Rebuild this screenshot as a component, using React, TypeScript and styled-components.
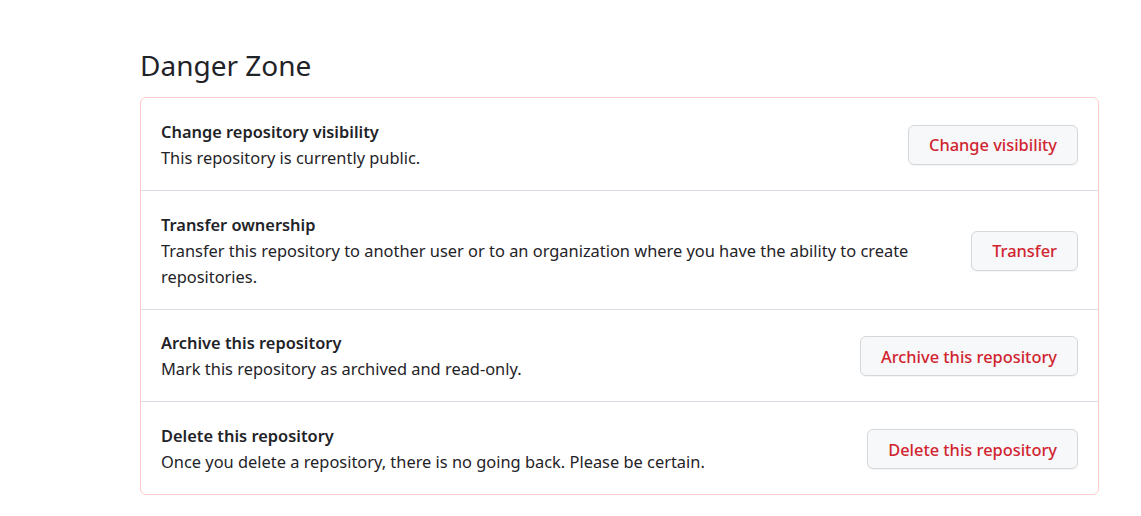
import React from "react";
import styled, { createGlobalStyle } from "styled-components";

const Global = createGlobalStyle`
  html, body { margin: 0; padding: 0; background: #ffffff; }
  body {
    font-family: "Noto Sans", "Liberation Sans", sans-serif;
    color: #1f2328;
  }
`;

const Page = styled.div`
  width: 1141px;
  padding: 46px 42px 20px 140px;
  box-sizing: border-box;
`;

const Heading = styled.h2`
  margin: 0 0 13px 0;
  font-size: 28px;
  font-weight: 400;
  line-height: 38px;
  color: #1f2328;
`;

const Box = styled.div`
  border: 1px solid #ffcecb;
  border-radius: 6px;
  width: 959px;
  box-sizing: border-box;
`;

const Row = styled.div`
  display: flex;
  align-items: center;
  justify-content: space-between;
  gap: 40px;
  padding: 20.75px 20px 19px;
  & + & {
    border-top: 1px solid #d8dee4;
  }
`;

const Info = styled.div`
  display: flex;
  flex-direction: column;
  flex: 1;
  min-width: 0;
`;

const Title = styled.div`
  font-size: 16.4px;
  font-weight: 600;
  line-height: 26px;
`;

const Desc = styled.div`
  font-size: 16.4px;
  line-height: 26px;
`;

const DangerButton = styled.button`
  flex: none;
  height: 40px;
  padding: 0 20px;
  font-family: inherit;
  font-size: 16.4px;
  font-weight: 500;
  color: #d1242f;
  background: #f6f8fa;
  border: 1px solid #d5d8da;
  border-radius: 6px;
  box-shadow: 0 1px 0 rgba(31, 35, 40, 0.04);
  cursor: pointer;
`;

const rows = [
  {
    title: "Change repository visibility",
    desc: "This repository is currently public.",
    action: "Change visibility",
  },
  {
    title: "Transfer ownership",
    desc: "Transfer this repository to another user or to an organization where you have the ability to create repositories.",
    action: "Transfer",
  },
  {
    title: "Archive this repository",
    desc: "Mark this repository as archived and read-only.",
    action: "Archive this repository",
  },
  {
    title: "Delete this repository",
    desc: "Once you delete a repository, there is no going back. Please be certain.",
    action: "Delete this repository",
  },
];

export default function App() {
  return (
    <>
      <Global />
      <Page>
        <Heading>Danger Zone</Heading>
        <Box>
          {rows.map((r) => (
            <Row key={r.title}>
              <Info>
                <Title>{r.title}</Title>
                <Desc>{r.desc}</Desc>
              </Info>
              <DangerButton>{r.action}</DangerButton>
            </Row>
          ))}
        </Box>
      </Page>
    </>
  );
}
